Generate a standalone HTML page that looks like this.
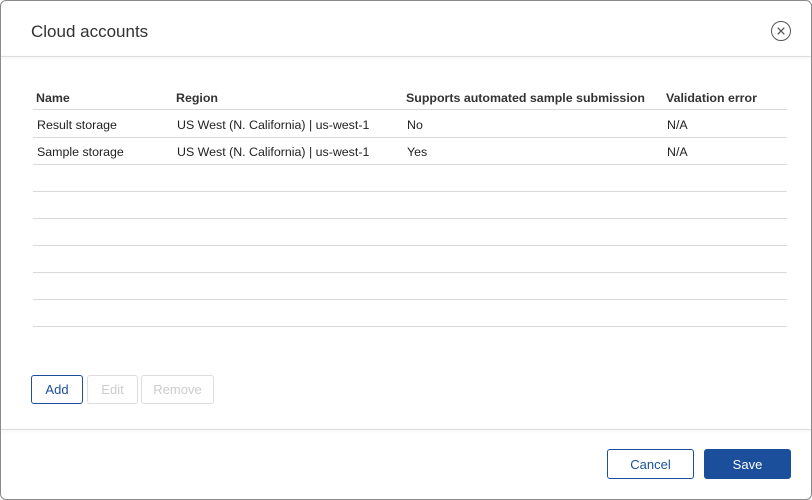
<!DOCTYPE html>
<html><head><style>
*{box-sizing:border-box;margin:0;padding:0}
body{width:812px;height:500px;background:#fff;font-family:"Liberation Sans",sans-serif;overflow:hidden}
.dlg{position:absolute;left:0;top:0;width:812px;height:500px;border:1px solid #8a8a8a;border-radius:6px;background:#fff;overflow:hidden}
.title{position:absolute;left:30px;top:21px;font-size:17px;color:#333}
.hdr{position:absolute;left:0;top:55px;width:100%;height:1px;background:#ddd;box-shadow:0 1px 3px rgba(0,0,0,.12)}
.close{position:absolute;left:770px;top:20px;width:20px;height:20px;border:1.3px solid #555;border-radius:50%}
.t{position:absolute;left:32px;width:754px;height:1px;background:#d9d9d9}
.c{position:absolute;font-size:12.4px;color:#222;white-space:nowrap}
.h{font-weight:bold;color:#333;font-size:12.4px}
.btn{position:absolute;height:29px;border-radius:3px;font-size:13px;text-align:center;line-height:28px;border:1px solid #ddd;color:#ccc;background:#fff}
.ftr{position:absolute;left:0;top:428px;width:100%;height:1px;background:#ddd;box-shadow:0 1px 3px rgba(0,0,0,.1)}
</style></head><body>
<div class="dlg">
<div class="title">Cloud accounts</div>
<div class="close"><svg width="18" height="18" viewBox="0 0 18 18" style="position:absolute;left:0;top:0"><path d="M5.7 5.7L12.3 12.3M12.3 5.7L5.7 12.3" stroke="#555" stroke-width="1.3"/></svg></div>
<div class="hdr"></div>

<div class="c h" style="left:35px;top:90px">Name</div>
<div class="c h" style="left:175px;top:90px">Region</div>
<div class="c h" style="left:405px;top:90px">Supports automated sample submission</div>
<div class="c h" style="left:665px;top:90px">Validation error</div>
<div class="t" style="top:108px"></div>
<div class="c" style="left:36px;top:117px">Result storage</div>
<div class="c" style="left:176px;top:117px">US West (N. California) | us-west-1</div>
<div class="c" style="left:406px;top:117px">No</div>
<div class="c" style="left:666px;top:117px">N/A</div>
<div class="t" style="top:136px"></div>
<div class="c" style="left:36px;top:144px">Sample storage</div>
<div class="c" style="left:176px;top:144px">US West (N. California) | us-west-1</div>
<div class="c" style="left:406px;top:144px">Yes</div>
<div class="c" style="left:666px;top:144px">N/A</div>
<div class="t" style="top:163px"></div>
<div class="t" style="top:190px"></div>
<div class="t" style="top:217px"></div>
<div class="t" style="top:244px"></div>
<div class="t" style="top:271px"></div>
<div class="t" style="top:298px"></div>
<div class="t" style="top:325px"></div>

<div class="btn" style="left:30px;top:374px;width:52px;border-color:#1b4f9c;color:#1b4f9c">Add</div>
<div class="btn" style="left:86px;top:374px;width:51px">Edit</div>
<div class="btn" style="left:140px;top:374px;width:73px">Remove</div>

<div class="ftr"></div>
<div class="btn" style="left:606px;top:448px;width:87px;height:30px;line-height:29px;border-color:#1b4f9c;color:#1b4f9c">Cancel</div>
<div class="btn" style="left:703px;top:448px;width:87px;height:30px;line-height:29px;border-color:#1b4f9c;background:#1b4f9c;color:#fff">Save</div>
</div>
</body></html>
